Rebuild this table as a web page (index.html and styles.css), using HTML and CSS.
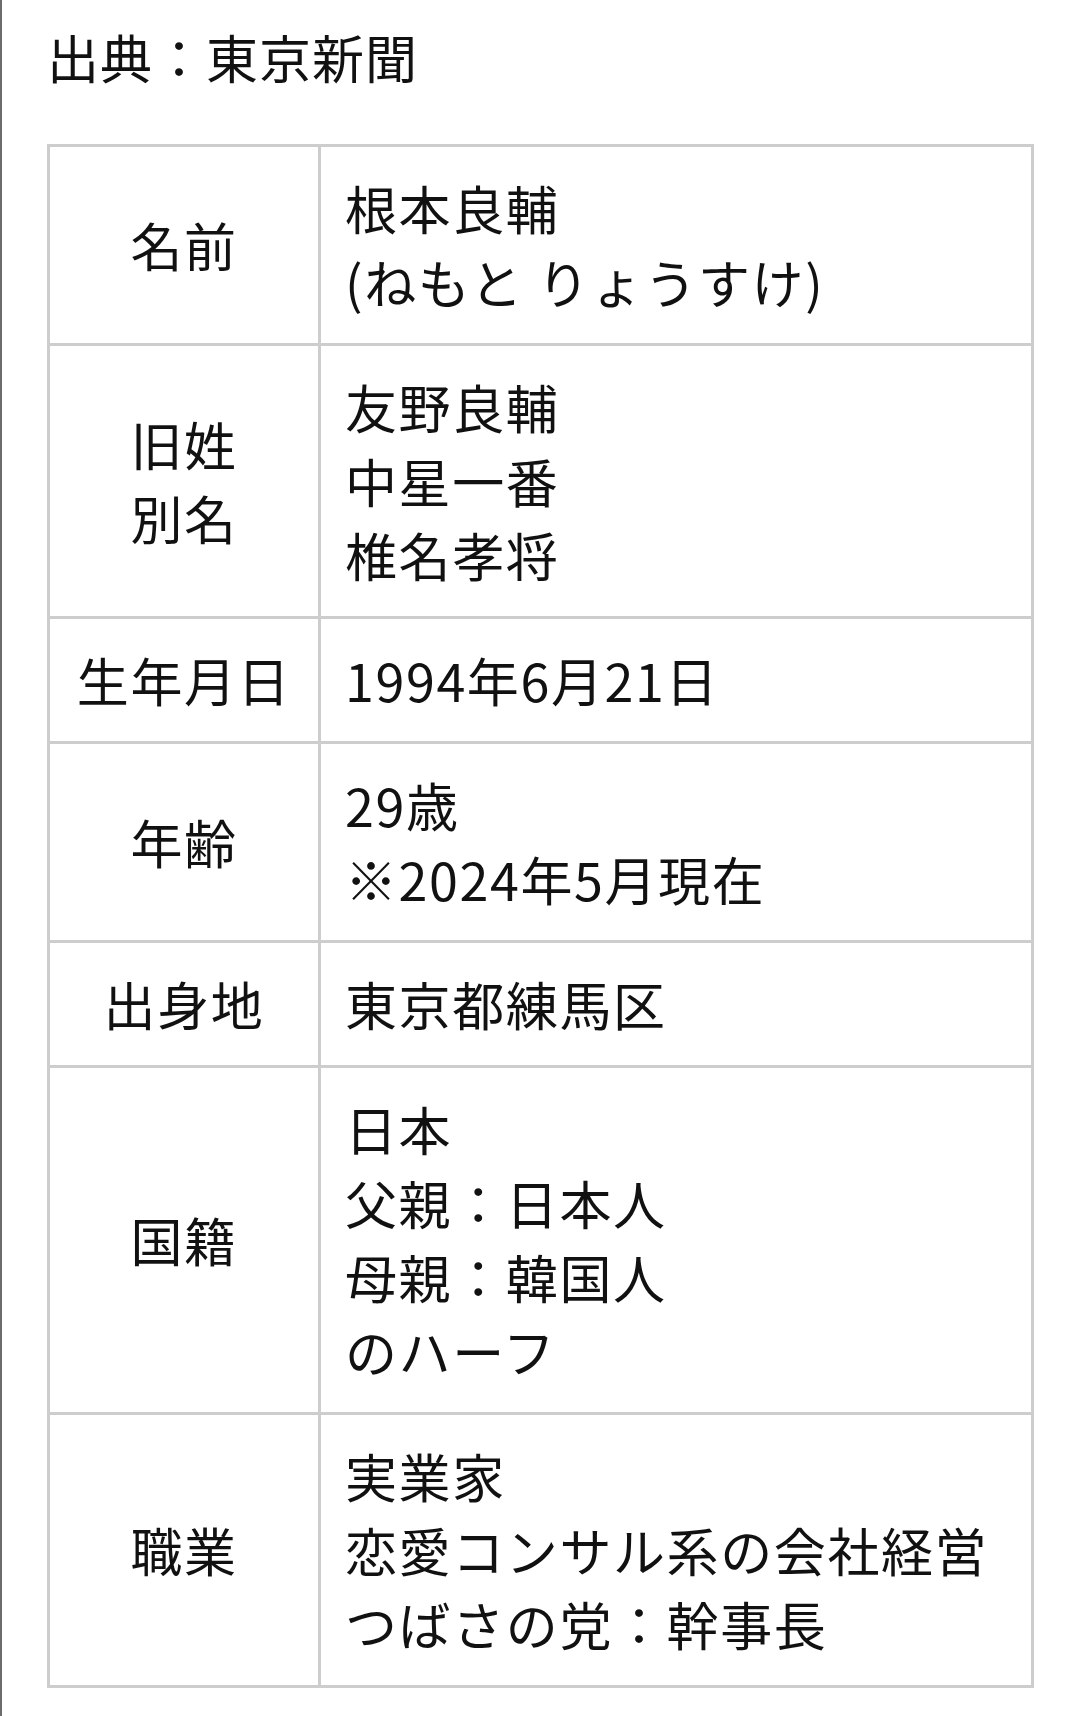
FILE: index.html
```html
<!DOCTYPE html>
<html lang="ja">
<head>
<meta charset="utf-8">
<title>プロフィール</title>
<link rel="stylesheet" href="styles.css">
</head>
<body>
<main class="page">
  <p class="source">出典：東京新聞</p>
  <table class="profile">
    <tbody>
      <tr>
        <th class="label">名前</th>
        <td class="value">根本良輔<br>(ねもと りょうすけ)</td>
      </tr>
      <tr>
        <th class="label">旧姓<br>別名</th>
        <td class="value">友野良輔<br>中星一番<br>椎名孝将</td>
      </tr>
      <tr>
        <th class="label">生年月日</th>
        <td class="value">1994年6月21日</td>
      </tr>
      <tr>
        <th class="label">年齢</th>
        <td class="value">29歳<br>※2024年5月現在</td>
      </tr>
      <tr>
        <th class="label">出身地</th>
        <td class="value">東京都練馬区</td>
      </tr>
      <tr>
        <th class="label">国籍</th>
        <td class="value">日本<br>父親：日本人<br>母親：韓国人<br>のハーフ</td>
      </tr>
      <tr>
        <th class="label">職業</th>
        <td class="value">実業家<br>恋愛コンサル系の会社経営<br>つばさの党：幹事長</td>
      </tr>
    </tbody>
  </table>
</main>
</body>
</html>
```

FILE: styles.css
```css
html {
  background: #ffffff;
}

body {
  margin: 0;
  min-height: 1716px;
  border-left: 2px solid #6d6d6d;
  background: #ffffff;
  color: #111111;
  font-family: "Noto Sans CJK JP", "Noto Sans", sans-serif;
  font-size: 52px;
  line-height: 74px;
}

.page {
  padding: 20px 46px 0 45px;
}

.source {
  margin: 0 0 50px 0;
  letter-spacing: 1px;
}

.profile {
  width: 100%;
  border-collapse: separate;
  border-spacing: 0;
  border-top: 3px solid #cdcdcd;
  border-left: 3px solid #cdcdcd;
  letter-spacing: 1.6px;
}

.label,
.value {
  border-right: 3px solid #cdcdcd;
  border-bottom: 3px solid #cdcdcd;
  padding: 24px 24px;
  vertical-align: middle;
  font-weight: 400;
}

.label {
  width: 220px;
  text-align: center;
  white-space: nowrap;
}

.value {
  text-align: left;
}
```
